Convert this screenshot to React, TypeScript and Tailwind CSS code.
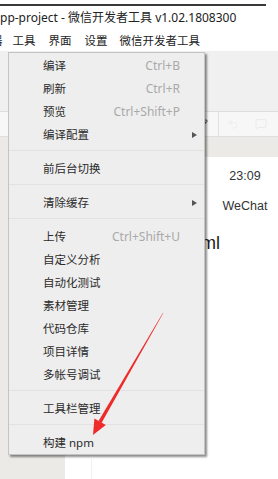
import { Pencil, Undo2, MessageSquare } from 'lucide-react';

const FONT = { fontFamily: '"Noto Sans", "Noto Sans CJK SC", sans-serif' };

type Entry = { label: string; keys?: string; sub?: boolean } | 'sep';

const MENU: Entry[] = [
  { label: '编译', keys: 'Ctrl+B' },
  { label: '刷新', keys: 'Ctrl+R' },
  { label: '预览', keys: 'Ctrl+Shift+P' },
  { label: '编译配置', sub: true },
  'sep',
  { label: '前后台切换' },
  'sep',
  { label: '清除缓存', sub: true },
  'sep',
  { label: '上传', keys: 'Ctrl+Shift+U' },
  { label: '自定义分析' },
  { label: '自动化测试' },
  { label: '素材管理' },
  { label: '代码仓库' },
  { label: '项目详情' },
  { label: '多帐号调试' },
  'sep',
  { label: '工具栏管理' },
  'sep',
  { label: '构建 npm' },
];

function DropMenu() {
  return (
    <div className="absolute left-[8px] top-[52px] w-[197px] bg-[#eeeeee] border border-[#c4c4c4] pt-[1px] shadow-[2px_2px_2px_rgba(0,0,0,0.45)]">
      {MENU.map((m, i) =>
        m === 'sep' ? (
          <div key={i} className="h-[11px] pt-[4px]">
            <div className="h-px bg-[#e2e2e2]" />
          </div>
        ) : (
          <div key={i} className="flex items-center h-[23px] pl-[34px] text-[11.5px] text-[#2b2b2b]">
            <span className="flex-1">{m.label}</span>
            {m.keys && <span className="text-[12px] text-[#a9a9a9]">{m.keys}</span>}
            <span className="w-[24px] flex justify-end pr-[7px]">
              {m.sub && (
                <span className="w-0 h-0 border-y-[3.5px] border-y-transparent border-l-[5px] border-l-[#555]" />
              )}
            </span>
          </div>
        )
      )}
    </div>
  );
}

function RedArrow() {
  return (
    <svg className="absolute left-0 top-0 pointer-events-none" width="278" height="479" viewBox="0 0 278 479">
      <polygon points="163.3,312.9 162.7,313.2 98.5,421.1 101.5,422.9" fill="#ef2a2a" />
      <polygon points="93,435 94.4,418.4 105.8,425" fill="#ef2a2a" />
    </svg>
  );
}

export default function App() {
  return (
    <div className="relative w-[278px] h-[479px] overflow-hidden bg-white flex flex-col" style={FONT}>
      <div className="h-[4px] shrink-0 bg-white" />
      <div className="h-[2px] shrink-0 bg-[#3a3a3a] mr-[12px]" />

      <div className="h-[24px] shrink-0 flex items-center text-[12px] text-[#222] whitespace-nowrap">
        <span>pp-project - 微信开发者工具 v1.02.1808300</span>
      </div>

      <div className="h-[21px] shrink-0 flex items-center text-[11.5px] text-[#222] whitespace-nowrap overflow-hidden">
        <span className="-ml-[9px] mr-[10px]">器</span>
        <span className="mr-[13px]">工具</span>
        <span className="mr-[13px]">界面</span>
        <span className="mr-[12px]">设置</span>
        <span>微信开发者工具</span>
      </div>

      <div className="h-[61px] shrink-0 bg-[#f0f0f0] border-b border-[#dddddd]" />

      <div className="h-[25px] shrink-0 bg-[#f7f7f7] border-b border-[#dedede] flex items-center">
        <div className="w-[198px]" />
        <Pencil className="w-[10px] h-[10px] text-[#333]" strokeWidth={2} />
        <div className="w-[10px]" />
        <div className="w-px h-full bg-[#e2e2e2]" />
        <div className="w-[8px]" />
        <Undo2 className="w-[12px] h-[12px] text-[#eeeeee]" />
        <div className="w-[16px]" />
        <MessageSquare className="w-[12px] h-[12px] text-[#ebebeb]" />
      </div>

      <div className="flex-1 flex bg-[#ebeae6]">
        <div className="w-[65px] shrink-0" />
        <div className="flex-1 flex flex-col min-w-0">
          <div className="h-[20px] shrink-0" />
          <div className="flex-1 bg-white flex flex-col overflow-hidden">
            <div className="w-[360px] shrink-0" style={{ fontFamily: '"Liberation Sans", Arial, sans-serif' }}>
              <div className="h-[38px] flex items-center justify-center text-[12.5px] text-[#333]">23:09</div>
              <div className="h-[22px] flex items-center justify-center text-[12.5px] text-[#333]">WeChat</div>
              <div className="pt-[12px] pl-[66px] text-[18px] leading-[28px] text-[#1a1a1a]">index.wxml</div>
            </div>
            <div className="flex-1" />
            <div className="h-[20px] flex">
              <div className="w-[26px]" />
              <div className="w-px bg-[#f0f0f0]" />
            </div>
          </div>
        </div>
      </div>

      <DropMenu />
      <RedArrow />
    </div>
  );
}
